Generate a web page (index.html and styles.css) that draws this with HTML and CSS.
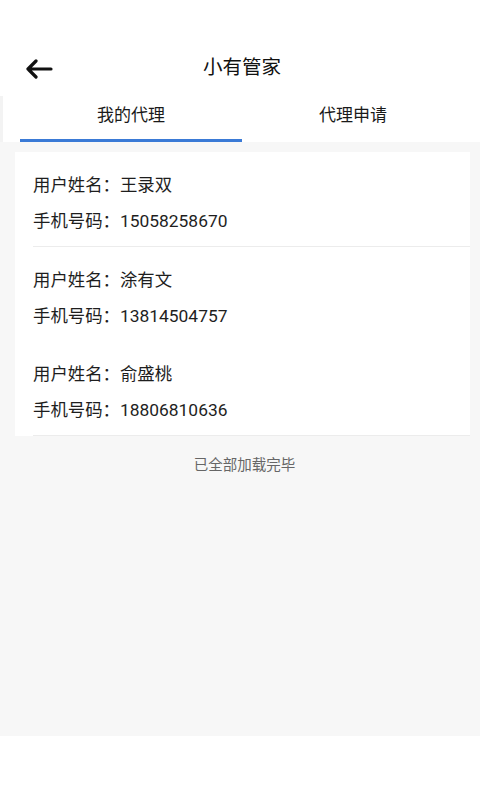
FILE: index.html
```html
<!DOCTYPE html>
<html lang="zh-CN">
<head>
<meta charset="utf-8">
<title>小有管家</title>
<link rel="stylesheet" href="styles.css">
</head>
<body>
<div class="app">
  <div class="top">
    <div class="status"></div>
    <header class="header">
      <button class="back" aria-label="返回">
        <svg width="28" height="20" viewBox="0 0 28 20"><path d="M26 10H3M11 2L3 10l8 8" fill="none" stroke="#111" stroke-width="3.2" stroke-linecap="round" stroke-linejoin="round"/></svg>
      </button>
      <h1 class="title">小有管家</h1>
    </header>
    <nav class="tabs">
      <div class="tab active">我的代理</div>
      <div class="tab">代理申请</div>
    </nav>
  </div>
  <main class="content">
    <section class="card">
      <div class="item divided">
        <div class="line">用户姓名：王录双</div>
        <div class="line">手机号码：15058258670</div>
      </div>
      <div class="item">
        <div class="line">用户姓名：涂有文</div>
        <div class="line">手机号码：13814504757</div>
      </div>
      <div class="item divided">
        <div class="line">用户姓名：俞盛桃</div>
        <div class="line">手机号码：18806810636</div>
      </div>
    </section>
    <p class="end">已全部加载完毕</p>
  </main>
  <div class="bottom"></div>
</div>
</body>
</html>
```
FILE: styles.css
```css
* { box-sizing: border-box; }
html, body { margin: 0; padding: 0; }
body {
  font-family: Roboto, "Noto Sans CJK SC", "Noto Sans", sans-serif;
  background: #fff;
  color: #1e1e1e;
}
.app {
  width: 480px;
  height: 800px;
  display: flex;
  flex-direction: column;
}
.top { background: #fff; }
.status { height: 40px; }
.header {
  height: 56px;
  display: flex;
  align-items: center;
  justify-content: center;
  position: relative;
}
.back {
  position: absolute;
  left: 25px;
  top: 18px;
  width: 30px;
  height: 22px;
  border: 0;
  padding: 0;
  background: transparent;
  display: flex;
  align-items: center;
}
.title {
  margin: 0;
  font-size: 19.5px;
  font-weight: 400;
  color: #111;
  line-height: 24px;
  padding-left: 4px;
}
.tabs {
  display: flex;
  padding: 0 16px 0 20px;
  height: 46px;
  border-left: 3px solid #f3f3f3;
}
.tab {
  flex: 1;
  text-align: center;
  font-size: 17px;
  line-height: 38px;
  color: #1a1a1a;
  border-bottom: 3px solid transparent;
  margin-left: -3px;
}
.tab + .tab { margin-left: 0; }
.tab.active { border-bottom-color: #3a7ad6; }
.content {
  flex: 1;
  background: #f7f7f7;
  padding: 10px 10px 0 15px;
}
.card {
  background: #fff;
}
.item {
  padding: 15px 0 7px 18px;
}
.item.divided { border-bottom: 1px solid #ececec; margin-left: 18px; padding-left: 0; }
.line {
  font-size: 17.4px;
  line-height: 36px;
  color: #1e1e1e;
}
.end {
  margin: 20px 0 0;
  text-align: center;
  font-size: 14.5px;
  line-height: 20px;
  color: #666;
  padding-left: 4px;
}
.bottom { height: 64px; background: #fff; }
```
